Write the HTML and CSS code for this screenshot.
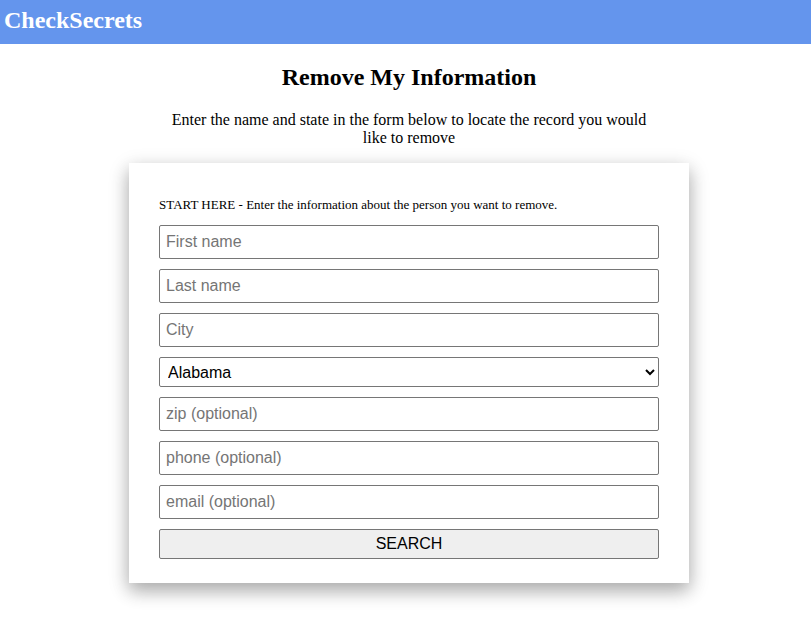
FILE: index.html
```html
<!DOCTYPE html>
<html lang="en">
<head>
<meta charset="utf-8">
<title>CheckSecrets - Remove My Information</title>
<link rel="stylesheet" href="styles.css">
</head>
<body>
<header class="topbar">
  <span class="brand">CheckSecrets</span>
</header>
<main class="main">
  <h2 class="title">Remove My Information</h2>
  <p class="intro">Enter the name and state in the form below to locate the record you would like to remove</p>
  <form class="card">
    <p class="hint">START HERE - Enter the information about the person you want to remove.</p>
    <div class="fields">
      <input class="field" type="text" placeholder="First name">
      <input class="field" type="text" placeholder="Last name">
      <input class="field" type="text" placeholder="City">
      <select class="select">
        <option>Alabama</option>
        <option>Alaska</option>
        <option>Arizona</option>
      </select>
      <input class="field" type="text" placeholder="zip (optional)">
      <input class="field" type="text" placeholder="phone (optional)">
      <input class="field" type="text" placeholder="email (optional)">
      <button class="btn" type="button">SEARCH</button>
    </div>
  </form>
</main>
</body>
</html>
```

FILE: styles.css
```css
html, body {
  margin: 0;
  padding: 0;
  background: #ffffff;
  font-family: "Liberation Serif", "Times New Roman", serif;
  color: #000;
}

.topbar {
  height: 44px;
  background: #6495ed;
  display: flex;
  align-items: center;
  padding: 0 5px;
  box-sizing: border-box;
}

.brand {
  color: #ffffff;
  font-weight: bold;
  font-size: 24px;
  line-height: 1;
  margin-top: -4px;
  margin-left: -1px;
}

.main {
  display: flex;
  flex-direction: column;
  align-items: center;
  padding: 0 0 40px 7px;
}

.title {
  font-size: 24px;
  font-weight: bold;
  margin: 20px 0;
  line-height: 27px;
}

.intro {
  width: 480px;
  text-align: center;
  font-size: 16px;
  line-height: 18px;
  margin: 0 0 16px;
}

.card {
  width: 560px;
  box-sizing: border-box;
  padding: 21px 30px 24px;
  background: #fff;
  box-shadow: 0 8px 16px 0 rgba(0, 0, 0, 0.2), 0 6px 20px 0 rgba(0, 0, 0, 0.19);
}

.hint {
  font-size: 13px;
  line-height: 15px;
  margin: 13px 0;
}

.fields {
  display: flex;
  flex-direction: column;
  gap: 10px;
}

.field {
  height: 34px;
  box-sizing: border-box;
  border: 1px solid #767676;
  border-radius: 2px;
  padding: 0 6px;
  font-family: "Liberation Sans", Arial, sans-serif;
  font-size: 16px;
  color: #000;
  background: #fff;
}

.field::placeholder {
  color: #757575;
}

.select {
  height: 30px;
  box-sizing: border-box;
  border: 1px solid #767676;
  border-radius: 2px;
  padding: 0 4px;
  font-family: "Liberation Sans", Arial, sans-serif;
  font-size: 16px;
  color: #000;
  background: #fff;
}

.btn {
  height: 30px;
  box-sizing: border-box;
  border: 1px solid #767676;
  border-radius: 2px;
  background: #efefef;
  font-family: "Liberation Sans", Arial, sans-serif;
  font-size: 16px;
  color: #000;
}
```
